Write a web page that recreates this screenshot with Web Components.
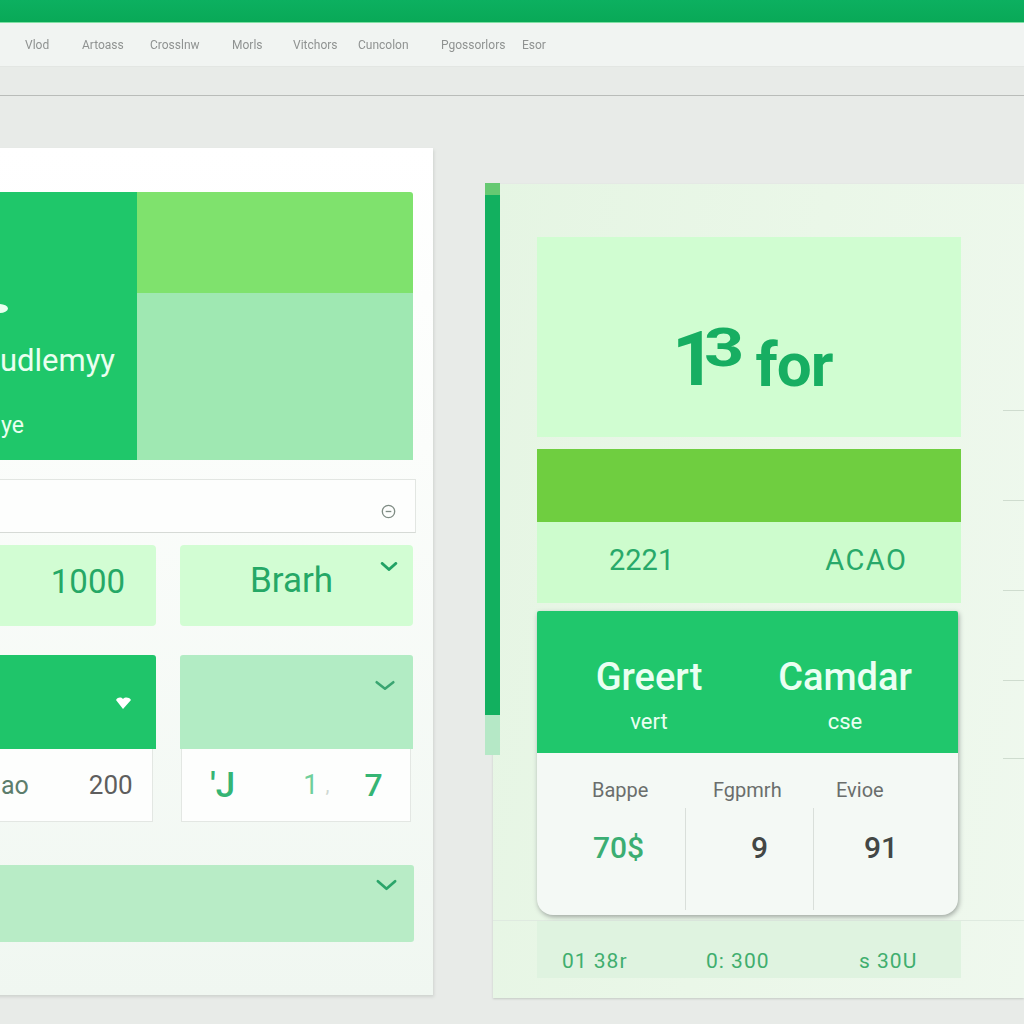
<!DOCTYPE html>
<html>
<head>
<meta charset="utf-8">
<title>Dashboard</title>
<style>
  html, body { margin: 0; height: 100%; }
  body { background: #e8ebe8; overflow: hidden; font-family: Roboto, "Noto Sans", sans-serif; }
</style>
</head>
<body>
<top-nav></top-nav>
<page-main>
  <left-panel></left-panel>
  <right-panel></right-panel>
</page-main>

<script>
const CHEVRON = `<svg viewBox="0 0 24 12" fill="none" stroke="currentColor" stroke-width="4" stroke-linecap="round" stroke-linejoin="round"><path d="M3 2l9 8 9-8"/></svg>`

class TopNav extends HTMLElement {
  constructor() {
    super();
    const links = ["Vlod", "Artoass", "Crosslnw", "Morls", "Vitchors", "Cuncolon", "Pgossorlors", "Esor"]
    const lefts = [25, 82, 150, 232, 293, 358, 441, 522]
    const shadowRoot = this.attachShadow({ mode: 'open' });
    shadowRoot.innerHTML = `
    <style>
      :host { display: block; }
      .green { height: 22px; background: linear-gradient(#0cb060, #09a957); border-bottom: 1px solid #7fe0a4; }
      nav {
        height: 43px;
        background: #f1f4f2;
        border-bottom: 1px solid #e3e6e3;
        display: flex;
        align-items: center;
        color: #8f9291;
        font-size: 12px;
        filter: blur(.45px);
      }
      nav span { flex: none; }
      .band { height: 28px; border-bottom: 1px solid #b9bcb9; }
    </style>
    <div class="green"></div>
    <nav>${links.map((l, i) => `<span style="margin-left:${lefts[i] - (i ? lefts[i - 1] : 0)}px;width:0;white-space:nowrap">${l}</span>`).join("")}</nav>
    <div class="band"></div>
    `
  }
}

class PageMain extends HTMLElement {
  constructor() {
    super();
    const shadowRoot = this.attachShadow({ mode: 'open' });
    shadowRoot.innerHTML = `
    <style>
      :host { display: flex; align-items: flex-start; margin-left: -20px; padding-top: 52px; width: 1044px; overflow: hidden; padding-bottom: 6px; }
    </style>
    <slot></slot>
    `
  }
}

class HeroBlock extends HTMLElement {
  constructor() {
    super();
    const shadowRoot = this.attachShadow({ mode: 'open' });
    shadowRoot.innerHTML = `
    <style>
      :host { display: grid; grid-template-columns: 157px 1fr; height: 268px; border-radius: 3px 3px 0 0; overflow: hidden; }
      .main { background: #1fc76a; color: #eafff0; display: flex; flex-direction: column; align-items: flex-end; }
      .dot { width: 18px; height: 9px; border-radius: 50%; background: #eafff0; align-self: flex-start; margin: 112px 0 0 10px; }
      .name { font-size: 31px; line-height: 36px; margin: 30px 22px 0 0; white-space: nowrap; }
      .sub { font-size: 23px; line-height: 28px; align-self: flex-start; margin: 33px 0 0 21px; }
      .side { display: grid; grid-template-rows: 101px 1fr; }
      .a { background: #7fe26d; }
      .b { background: #9fe8b2; }
    </style>
    <div class="main">
      <div class="dot"></div>
      <div class="name">udlemyy</div>
      <div class="sub">ye</div>
    </div>
    <div class="side"><div class="a"></div><div class="b"></div></div>
    `
  }
}

class SearchField extends HTMLElement {
  constructor() {
    super();
    const shadowRoot = this.attachShadow({ mode: 'open' });
    shadowRoot.innerHTML = `
    <style>
      :host {
        display: flex; align-items: center; justify-content: flex-end;
        height: 52px; margin: 19px -3px 0 0; padding-right: 19px;
        background: #fdfefd; border: 1px solid #e2e6e2; border-left: 0; border-bottom-color: #d6dad6;
      }
      svg { width: 15px; height: 15px; margin-top: 10px; color: #7f8c84; }
    </style>
    <svg viewBox="0 0 16 16" fill="none" stroke="currentColor" stroke-width="1.4"><circle cx="8" cy="8" r="6.6"/><path d="M5 8h6"/></svg>
    `
  }
}

class StatTile extends HTMLElement {
  constructor() {
    super();
    const shadowRoot = this.attachShadow({ mode: 'open' });
    shadowRoot.innerHTML = `
    <style>
      :host {
        display: flex; align-items: center; justify-content: flex-end; position: relative;
        height: 81px; background: #d2fdd3; border-radius: 4px; color: #25a866;
        font-size: 33px; padding-bottom: 8px; box-sizing: border-box;
      }
      :host([center]) { justify-content: center; padding: 0 10px 11px 0; font-size: 35px; }
      span { margin-right: 31px; }
      :host([center]) span { margin: 0; }
      svg { position: absolute; right: 15px; top: 17px; width: 18px; height: 9px; color: #22a265; }
    </style>
    <span><slot></slot></span>
    ${this.hasAttribute("chevron") ? CHEVRON : ""}
    `
  }
}

class SplitTile extends HTMLElement {
  constructor() {
    super();
    const shadowRoot = this.attachShadow({ mode: 'open' });
    shadowRoot.innerHTML = `
    <style>
      :host { display: block; }
      .head { height: 94px; border-radius: 3px 3px 0 0; position: relative; background: var(--head, #1fc56a); color: var(--mark, #fff); }
      .head ::slotted(svg) { position: absolute; right: var(--mark-right, 24px); top: var(--mark-top, 42px); }
      .body {
        height: 73px; background: #fdfefd; box-sizing: border-box;
        border: 1px solid #e3e7e3; border-top: 0; margin-right: var(--inset, 3px); margin-left: var(--inset-left, 0);
        display: flex; align-items: center; font-size: 27px;
      }
    </style>
    <div class="head"><slot name="mark"></slot></div>
    <div class="body"><slot></slot></div>
    `
  }
}

class ChevronBar extends HTMLElement {
  constructor() {
    super();
    const shadowRoot = this.attachShadow({ mode: 'open' });
    shadowRoot.innerHTML = `
    <style>
      :host { display: block; position: relative; height: 77px; background: #b8ecc6; border-radius: 0 3px 3px 0; margin: 43px -1px 0 0; color: #2ba56a; }
      svg { position: absolute; right: 16px; top: 14px; width: 23px; height: 12px; stroke-width: 2.8; }
    </style>
    ${CHEVRON}
    `
  }
}

class LeftPanel extends HTMLElement {
  constructor() {
    super();
    const shadowRoot = this.attachShadow({ mode: 'open' });
    shadowRoot.innerHTML = `
    <style>
      :host {
        display: block; flex: none; width: 453px; height: 847px; box-sizing: border-box;
        padding: 44px 20px 0 0;
        background: linear-gradient(#ffffff, #fbfdfb 300px, #f0f7f1);
        box-shadow: 1px 2px 3px #cfd3cf;
      }
      .row { display: grid; grid-template-columns: 176px 1fr; column-gap: 24px; margin-top: 12px; }
      .row.second { margin-top: 29px; }
      svg.mark { width: 17px; height: 12px; }
    </style>
    <hero-block></hero-block>
    <search-field></search-field>
    <div class="row">
      <stat-tile>1000</stat-tile>
      <stat-tile center chevron>Brarh</stat-tile>
    </div>
    <div class="row second">
      <split-tile>
        <svg slot="mark" class="mark" viewBox="0 0 17 12" fill="currentColor"><path d="M1 3c2-3 5-3 7-1 2-2 6-2 8 1l-8 9z"/></svg>
        <span style="color:#5c7d6c;margin-left:20px;font-size:25px">ao</span>
        <span style="color:#5e5e5e;margin-left:60px;font-size:26px">200</span>
      </split-tile>
      <split-tile style="--head:#b2ecc4;--mark:#3aa571;--mark-right:18px;--mark-top:25px;--inset:2px;--inset-left:1px">
        <svg slot="mark" style="width:20px;height:11px" viewBox="0 0 24 12" fill="none" stroke="currentColor" stroke-width="3" stroke-linecap="round" stroke-linejoin="round"><path d="M2 2l10 8 10-8"/></svg>
        <span style="color:#35b574;margin-left:28px;font-size:35px;font-weight:500">'J</span>
        <span style="color:#6fcf9b;margin-left:68px;font-size:27px">1</span>
        <span style="color:#cfd8d2;margin-left:7px;font-size:20px">,</span>
        <span style="color:#35b574;margin-left:35px;font-size:32px;font-weight:500">7</span>
      </split-tile>
    </div>
    <chevron-bar></chevron-bar>
    `
  }
}

class MetricCell extends HTMLElement {
  constructor() {
    super();
    const shadowRoot = this.attachShadow({ mode: 'open' });
    const labelX = this.getAttribute("label-x")
    const valueX = this.getAttribute("value-x")
    shadowRoot.innerHTML = `
    <style>
      :host { display: block; color: #6a6e6c; }
      .label { height: 55px; box-sizing: border-box; padding: 25px 0 0 ${labelX}px; font-size: 20px; line-height: 24px; white-space: nowrap; }
      .value {
        height: 102px; box-sizing: border-box; padding: 22px 0 0 ${valueX}px;
        font-size: 30px; line-height: 36px; color: var(--value, #434745); font-weight: 500;
        border-left: var(--rule, 1px solid #d9dfda);
      }
    </style>
    <div class="label">${this.getAttribute("label")}</div>
    <div class="value"><slot></slot></div>
    `
  }
}

class ResultCard extends HTMLElement {
  constructor() {
    super();
    const shadowRoot = this.attachShadow({ mode: 'open' });
    shadowRoot.innerHTML = `
    <style>
      :host {
        display: block; width: 421px; height: 304px; margin-top: 8px; overflow: hidden;
        border-radius: 2px 2px 16px 16px; background: #f4f9f5; box-shadow: 1px 2px 5px #9ea6a0;
      }
      .head { height: 142px; background: #20c76c; color: #eafff2; display: grid; grid-template-columns: 196px 196px; padding-left: 14px; text-align: center; }
      .t { font-size: 38px; line-height: 40px; margin-top: 46px; font-weight: 500; }
      .s { font-size: 22px; line-height: 26px; margin-top: 12px; }
      .body { display: grid; grid-template-columns: 148px 128px 145px; }
    </style>
    <div class="head">
      <div><div class="t">Greert</div><div class="s">vert</div></div>
      <div><div class="t">Camdar</div><div class="s">cse</div></div>
    </div>
    <div class="body">
      <metric-cell label="Bappe" label-x="55" value-x="55" style="--rule:1px solid transparent;--value:#3bae73">70$</metric-cell>
      <metric-cell label="Fgpmrh" label-x="28" value-x="65">9</metric-cell>
      <metric-cell label="Evioe" label-x="23" value-x="50">91</metric-cell>
    </div>
    `
  }
}

class RightPanel extends HTMLElement {
  constructor() {
    super();
    const shadowRoot = this.attachShadow({ mode: 'open' });
    shadowRoot.innerHTML = `
    <style>
      :host { display: flex; align-items: flex-start; flex: none; margin: 36px 0 0 52px; }
      .accent {
        flex: none; width: 15px; height: 572px; margin: -1px -7px 0 0; position: relative;
        background: linear-gradient(#66c972 0, #66c972 12px, #12b05f 12px, #12b05f 532px, #b5e8c6 532px);
      }
      .panel {
        width: 531px; height: 814px; box-sizing: border-box; padding: 53px 0 0 44px;
        display: flex;
        background:
          linear-gradient(transparent 736px, #dfeae0 736px, #dfeae0 737px, transparent 737px),
          linear-gradient(100deg, #e5f5e3, #eaf7e8 50%, #eff8ee);
        box-shadow: 0 1px 2px #c4c9c4;
      }
      .col { flex: none; width: 424px; }
      .big {
        height: 200px; background: #d0fdd1; color: #17ae62; display: flex; align-items: flex-end;
        font-weight: 700; padding-left: 135px; box-sizing: border-box; white-space: nowrap;
      }
      .one { font-size: 76px; line-height: 76px; margin-bottom: 40px; letter-spacing: -12px; }
      .sup { font-size: 54px; line-height: 54px; margin: 0 0 62px 0; display: inline-block; width: 40px; transform: scaleX(1.3); transform-origin: left; }
      .word { font-size: 62px; line-height: 62px; margin: 0 0 41px 12px; letter-spacing: -1px; }
      .lime { height: 73px; background: #6fce40; margin-top: 12px; }
      .pair {
        height: 81px; background: #cdfccd; color: #28a96a; font-size: 29px; display: flex; align-items: center;
        padding: 0 0 5px 72px; box-sizing: border-box;
      }
      .pair span:last-child { margin-left: 151px; letter-spacing: 1.5px; }
      .foot {
        height: 57px; margin-top: 6px; background: #dff3e0; color: #3fae6e; font-size: 21px; letter-spacing: 1px;
        display: grid; grid-template-columns: 144px 153px 1fr; padding: 22px 0 0 25px; box-sizing: border-box; align-items: center;
      }
      .ticks { flex: 1; padding: 173px 0 0 42px; }
      .ticks i { display: block; height: 1px; background: #cfdccf; margin-bottom: 89px; }
      .ticks i:nth-child(4) { margin-bottom: 77px; }
    </style>
    <div class="accent"></div>
    <div class="panel">
      <div class="col">
        <div class="big"><span class="one">1</span><span class="sup">3</span><span class="word">for</span></div>
        <div class="lime"></div>
        <div class="pair"><span>2221</span><span>ACAO</span></div>
        <result-card></result-card>
        <div class="foot"><span>01 38r</span><span>0: 300</span><span>s 30U</span></div>
      </div>
      <div class="ticks"><i></i><i></i><i></i><i></i><i></i></div>
    </div>
    `
  }
}

customElements.define("top-nav", TopNav)
customElements.define("page-main", PageMain)
customElements.define("hero-block", HeroBlock)
customElements.define("search-field", SearchField)
customElements.define("stat-tile", StatTile)
customElements.define("split-tile", SplitTile)
customElements.define("chevron-bar", ChevronBar)
customElements.define("left-panel", LeftPanel)
customElements.define("metric-cell", MetricCell)
customElements.define("result-card", ResultCard)
customElements.define("right-panel", RightPanel)
</script>
</body>
</html>
